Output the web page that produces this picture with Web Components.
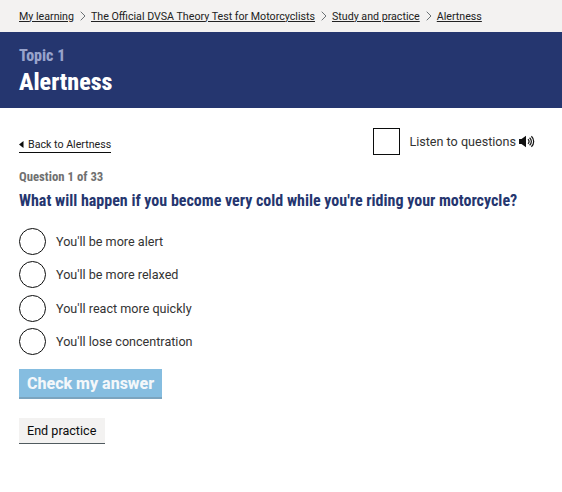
<!DOCTYPE html>
<html lang="en"><head><meta charset="utf-8"><title>Alertness</title>
<style>
html,body{margin:0;padding:0;background:#fff;font-family:Roboto,"Liberation Sans",sans-serif;color:#0b0c0c}
</style></head><body>
<practice-page></practice-page>
<template id="t-crumbs"><style>
:host{display:flex;align-items:center;height:32px;background:#f3f2f1;padding:0 19px;font-size:10.67px;color:#222;white-space:nowrap;box-sizing:border-box}
::slotted(a){color:#222;text-decoration:underline}
</style><slot></slot></template>
<template id="t-sep"><style>:host{display:inline-flex;width:17px;justify-content:center}svg{display:block;margin-left:1px}</style>
<svg width="6" height="10" viewBox="0 0 6 10"><path d="M.7.7 5 5 .7 9.3" fill="none" stroke="#6b7275" stroke-width="1"/></svg></template>
<template id="t-banner"><style>
:host{display:block;height:76px;background:#25366f;padding:14px 19px 0;box-sizing:border-box;font-weight:800}
.t{font-size:16px;line-height:19px;color:#98a3cb;font-stretch:85%}
.h{font-size:24px;line-height:30px;color:#fff;margin-top:2px;font-stretch:85%}
</style><div class="t"><slot name="topic"></slot></div><div class="h"><slot name="title"></slot></div></template>
<template id="t-tools"><style>
:host{display:flex;justify-content:space-between;align-items:center;height:28px;margin:19px 0 0;padding:0 27px 0 19px}
a{font-size:10.67px;color:#222;text-decoration:none;border-bottom:1px solid #0b0c0c;padding-bottom:1px;display:flex;align-items:center;margin-top:8px;height:13px}
a svg{margin-right:4px}
.l{display:flex;align-items:center;font-size:12.6px;color:#333}
.b{width:25px;height:25px;border:1px solid #0b0c0c;margin:1px 9px 0 0}
.l svg{margin-left:3px}
</style><a href="#"><svg width="5" height="7" viewBox="0 0 5 7"><path d="M4.5 0v7L0 3.5z" fill="#0b0c0c"/></svg>Back to Alertness</a>
<div class="l"><span class="b"></span>Listen to questions<svg width="16" height="13" viewBox="0 0 16 13"><path d="M0 4h2.5L7 .8v11.4L2.5 9H0z" fill="#111"/><path d="M9 4.2a3 3 0 0 1 0 4.6M10.6 2.7a5 5 0 0 1 0 7.6M12.4 1.2a7.3 7.3 0 0 1 0 10.6" fill="none" stroke="#111" stroke-width="1.2"/></svg></div></template>
<template id="t-q"><style>
:host{display:block;padding:0 19px;font-weight:700}
.n{font-size:12.75px;line-height:16px;color:#707070;margin-top:14px;font-stretch:85%}
.q{font-size:16px;line-height:20px;color:#25366f;margin-top:6px;font-stretch:85%}
</style><div class="n"><slot name="n"></slot></div><div class="q"><slot name="q"></slot></div></template>
<template id="t-opt"><style>
:host{display:flex;align-items:center;height:27px;margin-bottom:6.4px;font-size:12.6px;color:#333}
i{width:25px;height:25px;border:1px solid #0b0c0c;border-radius:50%;margin-right:10px;flex:none}
</style><i></i><slot></slot></template>
<template id="t-btn"><style>
:host{display:inline-flex;align-items:center;box-sizing:border-box}
:host([kind=primary]){height:30px;padding:0 8px;background:#85bde0;color:#f3f7fa;font-weight:800;font-size:16px;border-bottom:2px solid #7ba4bf}
:host([kind=secondary]){height:26px;padding:0 8px 0 8px;width:86px;background:#f3f2f1;color:#0b0c0c;font-size:12.6px;border-bottom:1px solid #505a5f}
</style><slot></slot></template>
<script>
const def=(n,t)=>customElements.define(n,class extends HTMLElement{constructor(){super();this.attachShadow({mode:'open'}).append(document.getElementById(t).content.cloneNode(true))}});
def('bread-crumbs','t-crumbs');def('crumb-sep','t-sep');def('topic-banner','t-banner');def('tool-row','t-tools');def('question-head','t-q');def('answer-option','t-opt');def('action-button','t-btn');
customElements.define('practice-page',class extends HTMLElement{constructor(){super();const s=this.attachShadow({mode:'open'});s.innerHTML=`<style>:host{display:block}
.o{padding:0 19px;margin-top:17px}.a{padding:0 19px;display:flex}.a1{margin-top:14px}.a2{margin-top:19px}</style>
<bread-crumbs><a href="#">My learning</a><crumb-sep></crumb-sep><a href="#">The Official DVSA Theory Test for Motorcyclists</a><crumb-sep></crumb-sep><a href="#">Study and practice</a><crumb-sep></crumb-sep><a href="#">Alertness</a></bread-crumbs>
<topic-banner><span slot="topic">Topic 1</span><span slot="title">Alertness</span></topic-banner>
<tool-row></tool-row>
<question-head><span slot="n">Question 1 of 33</span><span slot="q">What will happen if you become very cold while you're riding your motorcycle?</span></question-head>
<div class="o"><answer-option>You'll be more alert</answer-option><answer-option>You'll be more relaxed</answer-option><answer-option>You'll react more quickly</answer-option><answer-option>You'll lose concentration</answer-option></div>
<div class="a a1"><action-button kind="primary">Check my answer</action-button></div>
<div class="a a2"><action-button kind="secondary">End practice</action-button></div>`}});
</script></body></html>
